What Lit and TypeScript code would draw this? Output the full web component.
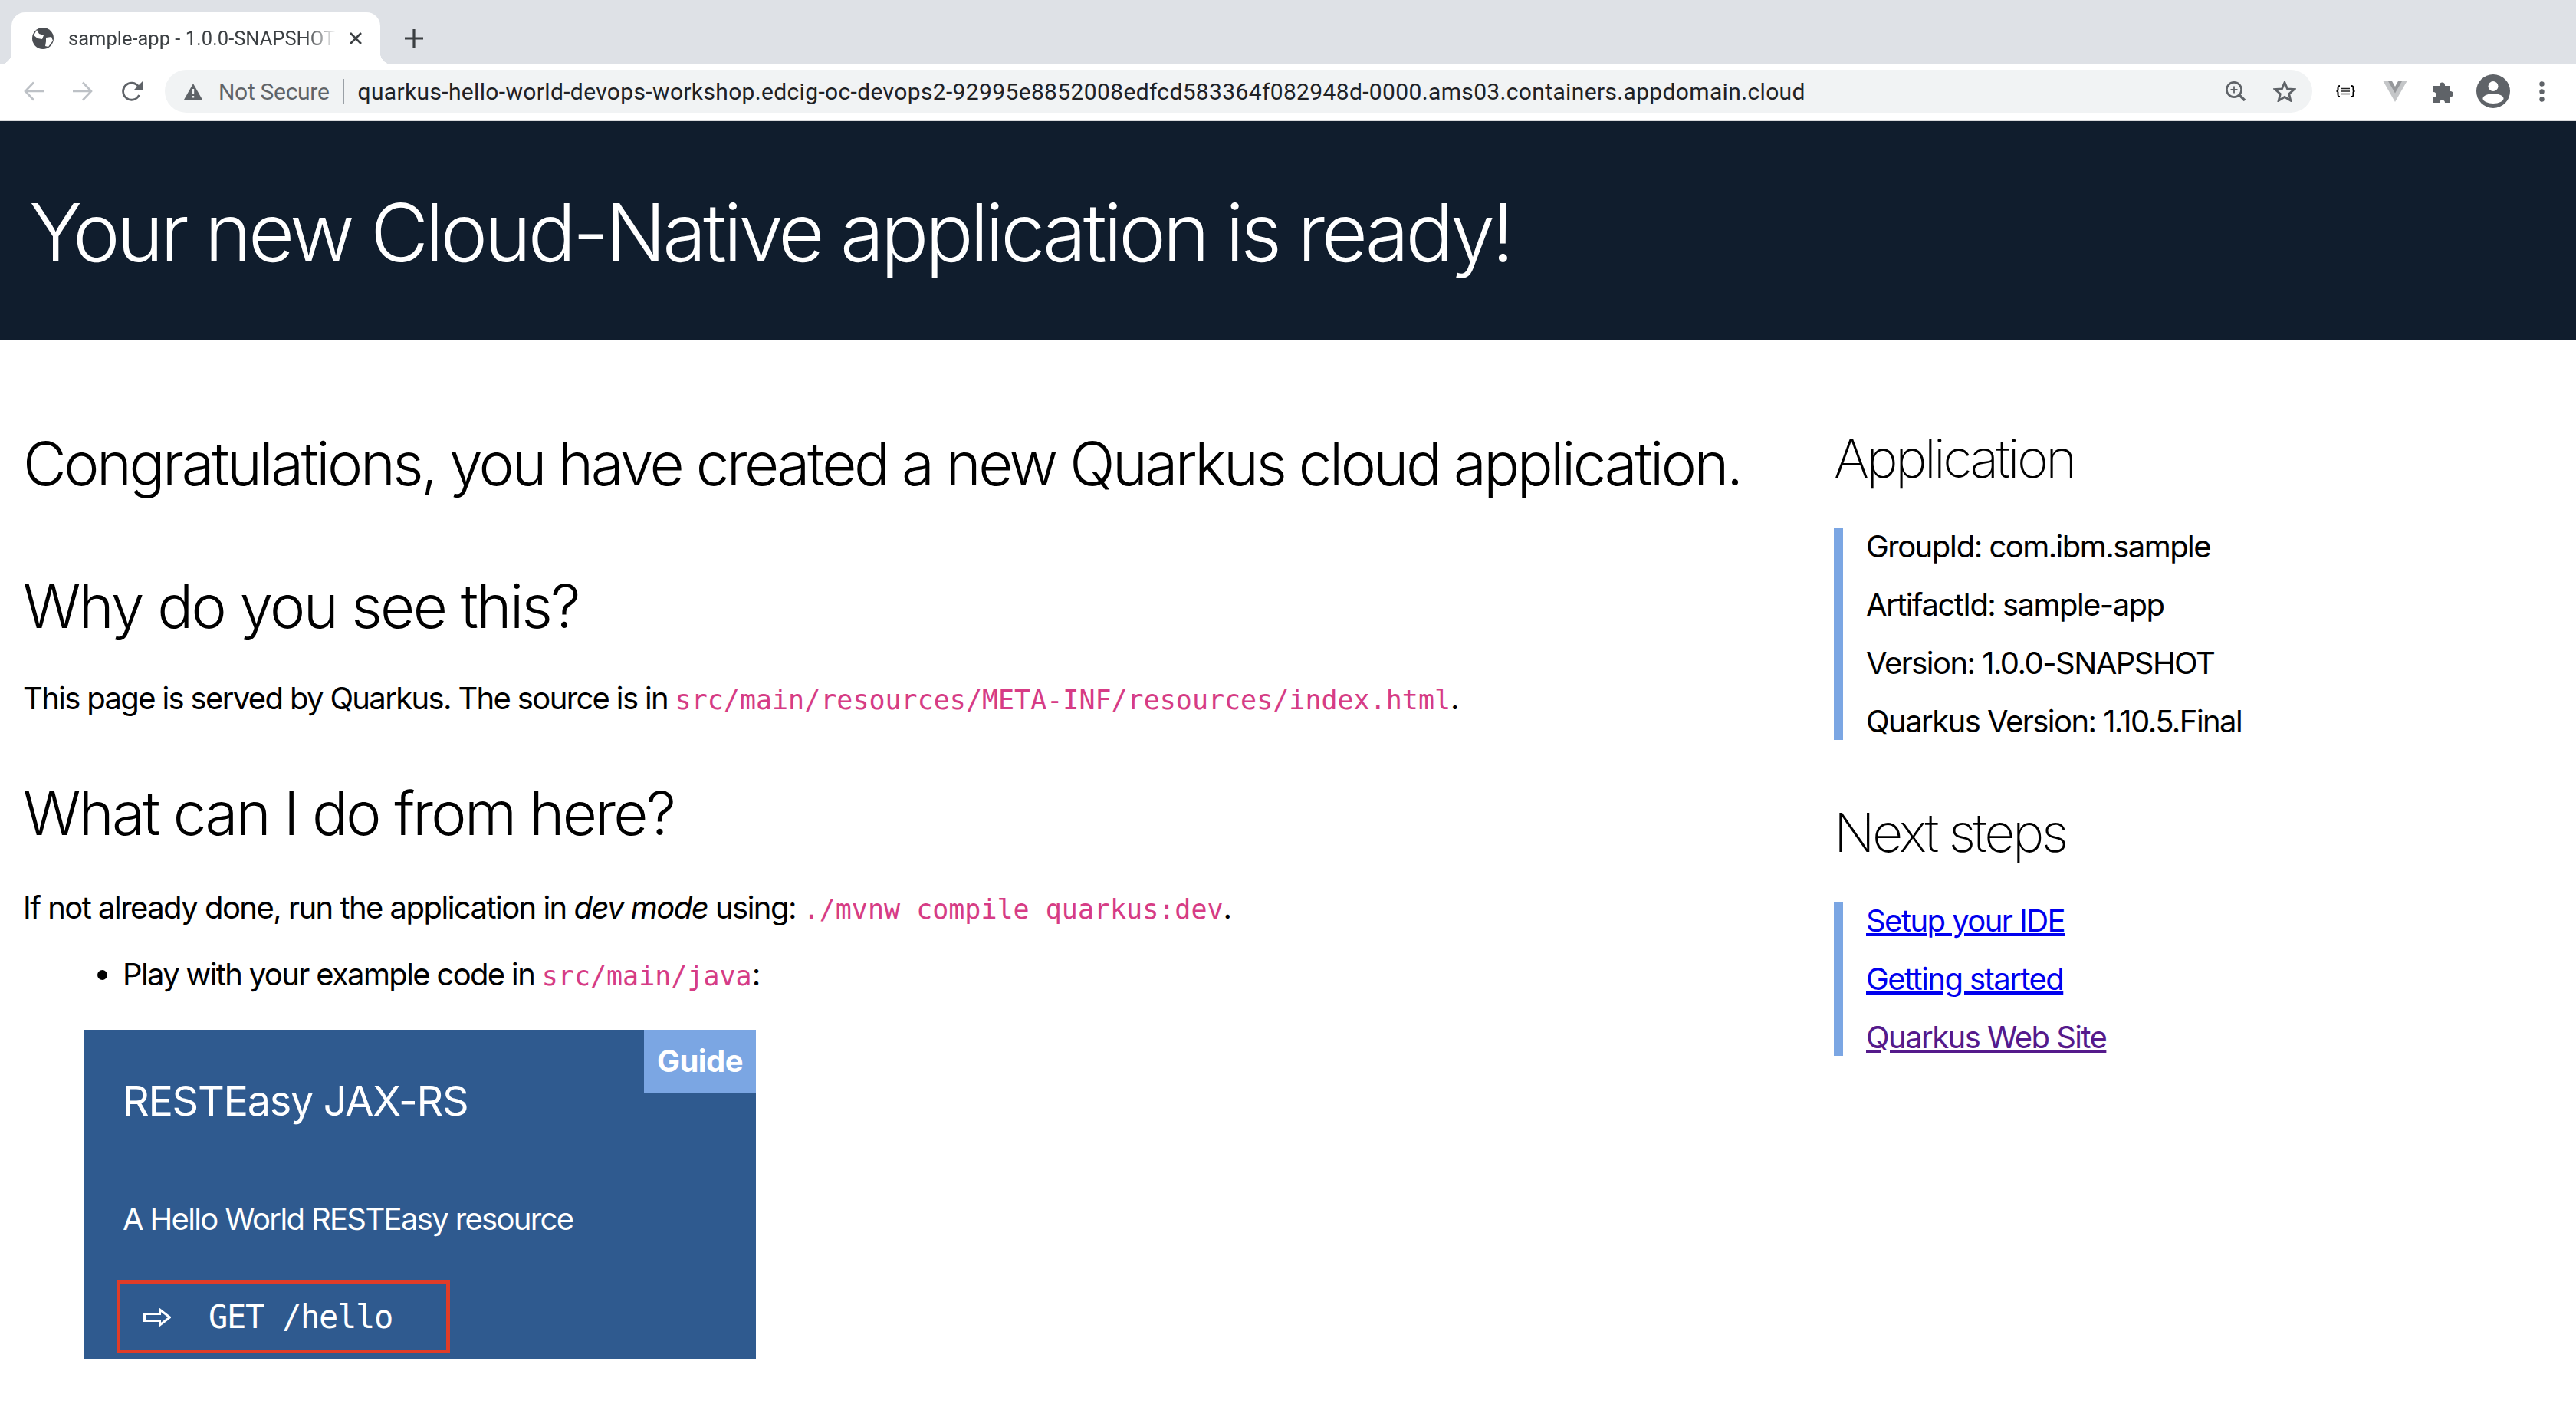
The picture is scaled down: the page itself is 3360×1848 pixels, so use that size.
import { LitElement, html, css } from 'lit';
import { customElement } from 'lit/decorators.js';

@customElement('app-root')
export class AppRoot extends LitElement {
  static styles = css`
    :host {
      display: block;
      width: 3360px;
      height: 1848px;
      overflow: hidden;
      background: #fff;
      color: #000;
      font-family: Inter, 'Liberation Sans', sans-serif;
    }
    a { color: #0000ee; }
    a.visited { color: #551a8b; }
    code { font-family: 'DejaVu Sans Mono', monospace; color: #d63c85; font-size: 35px; letter-spacing: 0; }
    svg { display: block; flex: none; }

    .tabs { height: 84px; background: #dee1e6; display: flex; align-items: flex-end; padding-left: 15px; box-sizing: border-box; }
    .tab { position: relative; width: 481px; height: 68px; background: #fff; border-radius: 18px 18px 0 0; display: flex; align-items: center; padding: 0 24px 0 27px; box-sizing: border-box; font: 25.5px Roboto, sans-serif; color: #3c4043; }
    .tab::before, .tab::after { content: ''; position: absolute; bottom: 0; width: 16px; height: 16px; }
    .tab::before { left: -16px; background: radial-gradient(circle at 0 0, transparent 16px, #fff 16.5px); }
    .tab::after { right: -16px; background: radial-gradient(circle at 100% 0, transparent 16px, #fff 16.5px); }
    .tab .title { width: 350px; margin-left: 19px; white-space: nowrap; overflow: hidden; -webkit-mask-image: linear-gradient(90deg, #000 310px, transparent 350px); mask-image: linear-gradient(90deg, #000 310px, transparent 350px); }
    .tab .close { margin-left: 17px; }
    .plus { margin: 0 0 22px 32px; }

    .toolbar { height: 74px; display: flex; align-items: center; padding: 0 0 2px 31px; box-sizing: border-box; border-bottom: 2px solid #d9dadc; }
    .forward, .reload { margin-left: 38px; }
    .omni { width: 2801px; height: 56px; margin-left: 29px; border-radius: 28px; background: #f1f3f4; display: flex; align-items: center; padding: 0 21px 0 25px; box-sizing: border-box; font: 30px Roboto, sans-serif; color: #202124; white-space: nowrap; }
    .not-secure { color: #5f6368; margin-left: 21px; letter-spacing: -0.3px; }
    .sep { width: 2px; height: 32px; background: #9aa0a6; margin: 0 18px 0 17px; }
    .url { flex: 1; letter-spacing: 0.35px; }
    .star { margin-left: 36px; }
    .braces { margin-left: 31px; }
    .vue { margin-left: 36px; }
    .puzzle { margin-left: 34px; }
    .avatar { margin-left: 27px; }
    .dots { margin-left: 38px; }

    .banner { height: 286px; background: #101d2d; color: #fff; display: flex; align-items: center; padding: 4px 0 0 38px; box-sizing: border-box; font-size: 104px; font-weight: 300; letter-spacing: -4.35px; }
    .main { display: flex; padding: 0 30px; }
    .left { width: 2362px; flex: none; }
    .right { flex: 1; }
    h1 { font-weight: 350; font-size: 78px; margin: 114px 0 0; line-height: 1.2; letter-spacing: -3.45px; }
    h2 { font-weight: 350; font-size: 78px; margin: 0; line-height: 1.2; letter-spacing: -2.55px; }
    h2.why { margin-top: 92px; }
    h2.what { margin-top: 79px; letter-spacing: -2.7px; }
    p { font-size: 40px; margin: 0; letter-spacing: -1.65px; }
    p.served { margin-top: 49px; }
    p.mode { margin-top: 51px; letter-spacing: -1.53px; }
    ul { margin: 38px 0 0; padding-left: 130px; font-size: 40px; letter-spacing: -1.65px; }
    .card { margin: 48px 0 0 80px; width: 876px; height: 430px; background: #2f5a8f; color: #fff; position: relative; padding: 60px 50px 0; box-sizing: border-box; }
    .card h3 { margin: 0; font-weight: 400; font-size: 54px; letter-spacing: -1.3px; }
    .card .desc { font-size: 40px; margin-top: 97px; letter-spacing: -1.65px; }
    .badge { position: absolute; top: 0; right: 0; width: 146px; height: 82px; background: #7ba6e3; font-size: 40px; font-weight: 700; letter-spacing: -0.6px; display: flex; align-items: center; justify-content: center; }
    .cta { position: absolute; left: 42px; bottom: 8px; width: 435px; height: 96px; border: 5px solid #e03c28; box-sizing: border-box; display: flex; align-items: center; padding: 2px 0 0 30px; gap: 49px; font: 42px 'DejaVu Sans Mono', monospace; letter-spacing: -1.3px; }

    .side h2 { font-size: 70px; font-weight: 200; letter-spacing: -3.6px; }
    .side h2.app { margin-top: 112px; }
    .side h2.next { margin-top: 79px; }
    .list { margin-top: 49px; border-left: 12px solid #7ba6e3; padding-left: 30px; font-size: 40px; letter-spacing: -1.55px; display: flex; flex-direction: column; gap: 28px; line-height: 48px; }
  `;

  render() {
    return html`
      <div class="tabs">
        <div class="tab">
          <svg width="28" height="28" viewBox="0 0 28 28"><circle cx="14" cy="14" r="14" fill="#4a4d52"/><path d="M6 3l3 5 6 2-2 5-6-1-5-4zM18 13l7-1 2 5-6 8-4-1 1-6z" fill="#fff"/></svg>
          <span class="title">sample-app - 1.0.0-SNAPSHOT</span>
          <svg class="close" width="16" height="16" viewBox="0 0 16 16"><path d="M1 1l14 14M15 1L1 15" stroke="#3c4043" stroke-width="2.6"/></svg>
        </div>
        <svg class="plus" width="24" height="24" viewBox="0 0 24 24"><path d="M12 0v24M0 12h24" stroke="#3c4043" stroke-width="3.2"/></svg>
      </div>
      <div class="toolbar">
        <svg width="26" height="26" viewBox="0 0 26 26"><path d="M26 13H2M13 1.5L2 13l11 11.5" fill="none" stroke="#bdc1c6" stroke-width="2.6"/></svg>
        <svg class="forward" width="26" height="26" viewBox="0 0 26 26"><path d="M0 13h24M13 1.5L24 13 13 24.5" fill="none" stroke="#bdc1c6" stroke-width="2.6"/></svg>
        <svg class="reload" width="27" height="27" viewBox="0 0 27 27"><path d="M22.5 18a11 11 0 1 1-.8-11" fill="none" stroke="#5f6368" stroke-width="2.8"/><path d="M27 0v11H16z" fill="#5f6368"/></svg>
        <div class="omni">
          <svg width="24" height="21" viewBox="0 0 24 21"><path d="M12 0l12 21H0z" fill="#5f6368"/><path d="M12 7v7M12 16v2.5" stroke="#f1f3f4" stroke-width="2.4"/></svg>
          <span class="not-secure">Not Secure</span><span class="sep"></span>
          <span class="url">quarkus-hello-world-devops-workshop.edcig-oc-devops2-92995e8852008edfcd583364f082948d-0000.ams03.containers.appdomain.cloud</span>
          <svg width="26" height="26" viewBox="0 0 26 26"><circle cx="11" cy="11" r="9.6" fill="none" stroke="#5f6368" stroke-width="2.6"/><path d="M17.5 17.5l7.5 7.5" stroke="#5f6368" stroke-width="3.4"/><path d="M11 6.5v9M6.500 11h9" stroke="#5f6368" stroke-width="1.8"/></svg>
          <svg class="star" width="30" height="28" viewBox="0 0 30 28"><path d="M15 2.500l3.500 8.300 9 .7-6.800 5.900 2.100 8.800L15 21.500l-7.800 4.700 2.100-8.800-6.800-5.900 9-.7z" fill="none" stroke="#5f6368" stroke-width="2.800"/></svg>
        </div>
        <svg class="braces" width="25" height="16" viewBox="0 0 25 16"><path d="M5 1C2.500 1 2.500 2 2.500 4v2.500C2.500 8 2 8 .5 8 2 8 2.500 8 2.500 9.500V12c0 2 0 3 2.500 3M20 1c2.500 0 2.500 1 2.500 3v2.500C22.500 8 23 8 24.500 8 23 8 22.500 8 22.500 9.500V12c0 2 0 3-2.500 3" fill="none" stroke="#000" stroke-width="2"/><path d="M7 4.500h11M7 8h11M7 11.500h11" stroke="#222" stroke-width="1.700"/></svg>
        <svg class="vue" width="32" height="28" viewBox="0 0 32 28"><path d="M0 0h32L16 28z" fill="#c4c6c8"/><path d="M6.500 0h19L16 16.500z" fill="#96989b"/><path d="M11.500 0h9L16 8z" fill="#fff"/></svg>
        <svg class="puzzle" width="29" height="29" viewBox="0 0 29 29"><path d="M0 7h8a4 4 0 0 1 0-1 3.500 3.500 0 0 1 7 0 4 4 0 0 1 0 1h7v7a3.500 3.500 0 0 1 0 7.500V29h-7a3.500 3.500 0 0 0-7 0H0v-7a3.500 3.500 0 0 0 0-7z" fill="#5f6368"/></svg>
        <svg class="avatar" width="44" height="44" viewBox="0 0 44 44"><circle cx="22" cy="22" r="22" fill="#5f6368"/><circle cx="22" cy="15.500" r="6.500" fill="#fff"/><ellipse cx="22" cy="31.500" rx="13.500" ry="6.500" fill="#fff"/></svg>
        <svg class="dots" width="7" height="27" viewBox="0 0 7 27"><circle cx="3.500" cy="3.500" r="3.200" fill="#5f6368"/><circle cx="3.500" cy="13.500" r="3.200" fill="#5f6368"/><circle cx="3.500" cy="23.500" r="3.200" fill="#5f6368"/></svg>
      </div>
      <div class="banner">Your new Cloud-Native application is ready!</div>
      <div class="main">
        <div class="left">
          <h1>Congratulations, you have created a new Quarkus cloud application.</h1>
          <h2 class="why">Why do you see this?</h2>
          <p class="served">This page is served by Quarkus. The source is in <code>src/main/resources/META-INF/resources/index.html</code>.</p>
          <h2 class="what">What can I do from here?</h2>
          <p class="mode">If not already done, run the application in <em>dev mode</em> using: <code>./mvnw compile quarkus:dev</code>.</p>
          <ul><li>Play with your example code in <code>src/main/java</code>:</li></ul>
          <div class="card">
            <div class="badge">Guide</div>
            <h3>RESTEasy JAX-RS</h3>
            <div class="desc">A Hello World RESTEasy resource</div>
            <div class="cta">
              <svg width="36" height="24" viewBox="0 0 36 24"><path d="M1.500 7.500h20V2l13 10-13 10v-5.500h-20z" fill="none" stroke="#fff" stroke-width="3"/></svg>
              <span>GET /hello</span>
            </div>
          </div>
        </div>
        <div class="right side">
          <h2 class="app">Application</h2>
          <div class="list">
            <div>GroupId: com.ibm.sample</div>
            <div>ArtifactId: sample-app</div>
            <div>Version: 1.0.0-SNAPSHOT</div>
            <div>Quarkus Version: 1.10.5.Final</div>
          </div>
          <h2 class="next">Next steps</h2>
          <div class="list">
            <div><a href="#">Setup your IDE</a></div>
            <div><a href="#">Getting started</a></div>
            <div><a class="visited" href="#">Quarkus Web Site</a></div>
          </div>
        </div>
      </div>
    `;
  }
}
